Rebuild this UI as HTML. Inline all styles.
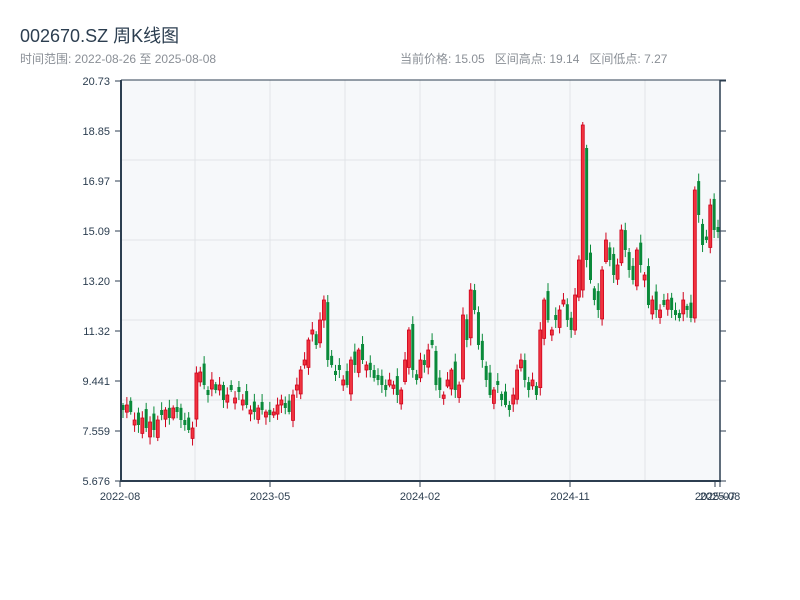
<!DOCTYPE html>
<html><head><meta charset="utf-8">
<style>
body{margin:0;background:#fff;width:800px;height:600px;overflow:hidden;font-family:"Liberation Sans","Noto Sans CJK SC",sans-serif;}
.t{position:absolute;left:20px;top:22px;font-size:18px;color:#2c3e50;}
.s{position:absolute;top:50px;font-size:12px;color:#8a8f96;}
</style></head><body>
<div class="t">002670.SZ 周K线图</div>
<div class="s" style="left:20px">时间范围: 2022-08-26 至 2025-08-08</div>
<div class="s" style="left:400px">当前价格: 15.05&nbsp;&nbsp;&nbsp;区间高点: 19.14&nbsp;&nbsp;&nbsp;区间低点: 7.27</div>
<svg id="c" width="800" height="600" style="position:absolute;left:0;top:0" font-family="Liberation Sans, sans-serif" font-size="11" fill="#2c3e50"></svg>
<script>
(function(){
var s='';
s+='<rect x="121" y="80" width="599" height="401" fill="#f6f8fa"/>';
[160,240,320,400].forEach(function(y){s+='<line x1="121" x2="720" y1="'+y+'" y2="'+y+'" stroke="#e1e4e8" stroke-width="1"/>';});
[195,270,345,420,495,570,645].forEach(function(x){s+='<line y1="80" y2="481" x1="'+x+'" x2="'+x+'" stroke="#e1e4e8" stroke-width="1"/>';});
var cl=[410,405,412,420,425,418,428,422,430,420,415,410,418,408,412,420,425,430,428,
373,372,385,395,380,390,385,400,395,390,398,392,400,405,410,412,408,
410,412,415,412,405,400,408,412,
395,385,370,360,340,330,345,320,300,
360,365,375,370,380,385,360,365,350,360,365,370,378,380,385,390,380,385,395,390,
360,330,370,380,360,365,350,345,
385,390,395,380,370,390,385,
315,340,290,310,345,
360,380,395,390,385,400,405,410,395,370,360,380,390,
380,395,330,300,320,
330,320,310,300,320,330,295,260,
125,
260,280,300,310,270,240,260,275,265,230,250,270,280,250,265,275,
305,300,310,310,305,300,310,315,318,300,310,318,
190,215,245,240,205,230,232];
var n=cl.length,x0=123,x1=718,dx=(x1-x0)/(n-1),prev=408;
for(var i=0;i<n;i++){
 var o=prev+Math.sin(i*2.9)*9,c=cl[i];if(i==119)o=290;if(i==120)o=148;if(i==148)o=318;
 if(Math.abs(o-c)<3)o=c+((i%2)?5:-5);
 var up=c<o,bt=Math.min(o,c),bb=Math.max(o,c);
 var wt=bt-2-Math.abs(Math.sin(i*1.7))*6,wb=bb+2+Math.abs(Math.cos(i*2.3))*6;
 if(i==119){wt=122;}
 var x=x0+i*dx,col=up?'#d0021b':'#0a8a3a';
 s+='<line x1="'+x+'" x2="'+x+'" y1="'+wt+'" y2="'+wb+'" stroke="'+col+'" stroke-width="1"/>';
 s+='<rect x="'+(x-1.5)+'" y="'+bt+'" width="3" height="'+(bb-bt)+'" fill="'+(up?'#f0343f':col)+'" stroke="'+col+'" stroke-width="'+(up?0.8:0)+'"/>';
 prev=c;
}
s+='<line x1="121" x2="726" y1="80" y2="80" stroke="#2c3e50" stroke-width="1"/>';
s+='<line x1="720" x2="720" y1="80" y2="481" stroke="#2c3e50" stroke-width="1.5"/>';
s+='<line x1="121" x2="121" y1="80" y2="482" stroke="#2c3e50" stroke-width="2"/>';
s+='<line x1="120" x2="721" y1="481" y2="481" stroke="#2c3e50" stroke-width="2"/>';
var yl=['20.73','18.85','16.97','15.09','13.20','11.32','9.441','7.559','5.676'];
for(var k=0;k<9;k++){var y=81+k*50;
 s+='<line x1="115" x2="121" y1="'+y+'" y2="'+y+'" stroke="#2c3e50"/>';
 s+='<line x1="720" x2="726" y1="'+y+'" y2="'+y+'" stroke="#2c3e50"/>';
 s+='<text x="110" y="'+(y+4)+'" text-anchor="end">'+yl[k]+'</text>';}
[[120,'2022-08'],[270,'2023-05'],[420,'2024-02'],[570,'2024-11'],[715,'2025-07'],[720,'2025-08']].forEach(function(a){
 s+='<line x1="'+a[0]+'" x2="'+a[0]+'" y1="481" y2="487" stroke="#2c3e50"/>';
 s+='<text x="'+a[0]+'" y="500" text-anchor="middle">'+a[1]+'</text>';});
document.getElementById('c').innerHTML=s;
})();
</script>
</body></html>
